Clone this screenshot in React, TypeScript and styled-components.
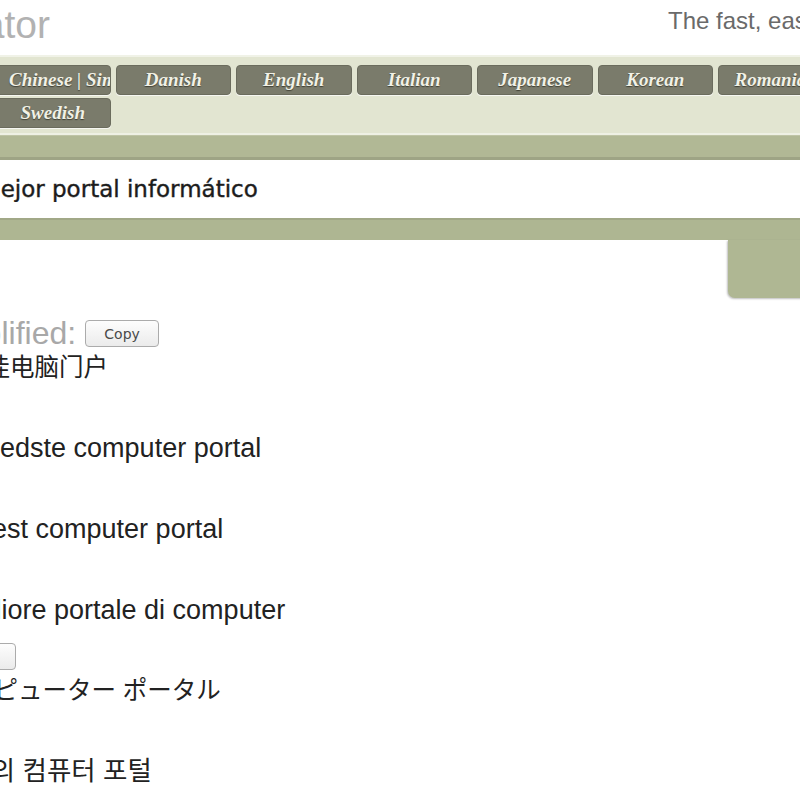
import React from "react";
import styled, { createGlobalStyle } from "styled-components";

const GlobalStyle = createGlobalStyle`
    html, body {
        margin: 0;
        padding: 0;
        background: #ffffff;
    }
    body {
        width: 800px;
        height: 800px;
        overflow: hidden;
    }
`;

// the screenshot is a crop of a wider page, so the page is pulled left
const Page = styled.div`
    width: 1118px;
    margin-left: -240px;
    font-family: "Liberation Sans", Arial, sans-serif;
`;

const Header = styled.header`
    display: grid;
    grid-template-columns: 290px 618px 1fr;
    height: 55px;
`;

const Title = styled.h1`
    grid-column: 1;
    margin: 0;
    padding-top: 5px;
    text-align: right;
    font-family: "Liberation Sans Narrow", "Liberation Sans", sans-serif;
    font-weight: normal;
    font-size: 39px;
    line-height: 39px;
    color: #b2b2b2;
    white-space: nowrap;
`;

const Tagline = styled.p`
    grid-column: 3;
    margin: 0;
    padding-top: 9px;
    font-size: 24px;
    line-height: 24px;
    color: #6a6a6a;
    white-space: nowrap;
`;

const LanguageBar = styled.nav`
    display: flex;
    flex-wrap: wrap;
    column-gap: 5px;
    row-gap: 3px;
    padding: 8px 0 5px 235px;
    background: #e2e5d1;
    border-top: 2px solid #f0f2e7;
    border-bottom: 2px solid #eef0e4;
`;

const LanguageTab = styled.a`
    display: block;
    box-sizing: border-box;
    width: 115.5px;
    height: 30px;
    padding: 0 13px;
    overflow: hidden;
    background: #7a7b6b;
    border: 1px solid #6b6c5d;
    border-radius: 4px;
    box-shadow: 0 1px 0 rgba(255, 255, 255, 0.7);
    font-family: "Liberation Serif", Georgia, serif;
    font-style: italic;
    font-weight: bold;
    font-size: 19px;
    line-height: 28px;
    text-align: center;
    white-space: nowrap;
    color: #f1f1e6;
    text-shadow: 0 1px 1px rgba(40, 40, 30, 0.7);
    cursor: pointer;
`;

const Band = styled.div`
    height: 21px;
    background: #b1b895;
    border-top: 1px solid #bfc4a6;
    border-bottom: 3px solid #9ea485;
`;

const SourceInput = styled.input`
    display: block;
    box-sizing: border-box;
    width: 100%;
    height: 58px;
    padding: 0 0 0 190px;
    border: none;
    outline: none;
    background: #ffffff;
    font-family: "DejaVu Sans", Verdana, sans-serif;
    font-size: 23px;
    color: #1c1c1c;
    -webkit-text-stroke: 0.4px #1c1c1c;
`;

const LowerBand = styled.div`
    height: 20px;
    background: #aeb692;
    border-top: 2px solid #a1a887;
`;

const Toolbar = styled.div`
    display: flex;
    justify-content: flex-end;
`;

const TranslateButton = styled.button`
    width: 150px;
    height: 58px;
    border: none;
    border-radius: 0 0 0 7px;
    background: #afb793;
    box-shadow: -1px 1px 2px rgba(0, 0, 0, 0.25);
    cursor: pointer;
`;

const Results = styled.section`
    padding: 17.5px 0 0 25px;
`;

const Result = styled.div`
    margin-bottom: 12.75px;
`;

const ResultHeading = styled.div`
    display: flex;
    align-items: center;
    gap: 9px;
    height: 36px;
    font-size: 32px;
    color: #a8a8a8;
    white-space: nowrap;
`;

const CopyButton = styled.button`
    width: 74px;
    height: 27px;
    padding: 0;
    border: 1px solid #ababab;
    border-radius: 4px;
    background: linear-gradient(#fdfdfd, #ebebeb);
    font-family: "DejaVu Sans", Verdana, sans-serif;
    font-size: 14px;
    color: #4a4a4a;
    cursor: pointer;
`;

const cjkFonts: Record<string, string> = {
    zh: `"Noto Sans CJK SC"`,
    ja: `"Noto Sans CJK JP"`,
    ko: `"Noto Sans CJK KR"`,
};

const fontSizes: Record<string, string> = {
    zh: "24.5px",
    ja: "24.5px",
    ko: "26.5px",
};

const Translation = styled.p<{ $indent: number; $lang: string }>`
    margin: 0;
    height: 32px;
    padding-left: ${props => props.$indent}px;
    font-family: "Liberation Sans", ${props => cjkFonts[props.$lang] ?? `"Noto Sans CJK SC"`}, sans-serif;
    font-size: ${props => fontSizes[props.$lang] ?? "27px"};
    line-height: 32px;
    color: #222222;
    white-space: nowrap;
`;

const languages = ["Chinese | Simplified", "Danish", "English", "Italian", "Japanese", "Korean", "Romanian", "Swedish"];

const results = [
    { language: "Chinese | Simplified", lang: "zh", text: "最佳电脑门户", copy: true, indent: 176 },
    { language: "Danish", lang: "da", text: "Den bedste computer portal", copy: false, indent: 143 },
    { language: "English", lang: "en", text: "The best computer portal", copy: false, indent: 138 },
    { language: "Italian", lang: "it", text: "Il migliore portale di computer", copy: false, indent: 146 },
    { language: "Japanese", lang: "ja", text: "最高のコンピューター ポータル", copy: true, indent: 86 },
    { language: "Korean", lang: "ko", text: "최고의 컴퓨터 포털", copy: true, indent: 157 },
];

export default function App() {
    return (
        <>
            <GlobalStyle />
            <Page>
                <Header>
                    <Title>Translator</Title>
                    <Tagline>The fast, easy way to translate</Tagline>
                </Header>

                <LanguageBar>
                    {languages.map(name => (
                        <LanguageTab key={name}>{name}</LanguageTab>
                    ))}
                </LanguageBar>
                <Band />

                <SourceInput readOnly value="El mejor portal informático" />
                <LowerBand />
                <Toolbar>
                    <TranslateButton aria-label="Translate" />
                </Toolbar>

                <Results>
                    {results.map(result => (
                        <Result key={result.language}>
                            <ResultHeading>
                                {result.language}:
                                {result.copy && <CopyButton>Copy</CopyButton>}
                            </ResultHeading>
                            <Translation lang={result.lang} $lang={result.lang} $indent={result.indent}>
                                {result.text}
                            </Translation>
                        </Result>
                    ))}
                </Results>
            </Page>
        </>
    );
}
